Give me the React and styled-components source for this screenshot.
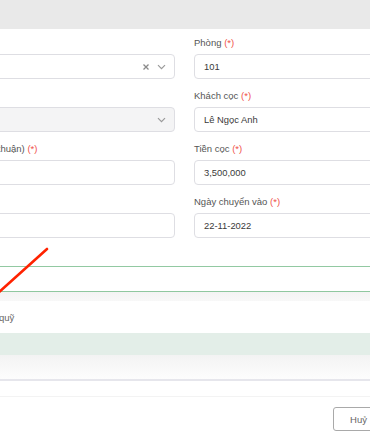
import styled, { createGlobalStyle } from 'styled-components'

const GlobalStyle = createGlobalStyle`
  html, body {
    margin: 0;
    padding: 0;
    background: #fff;
    overflow: hidden;
  }
  body {
    font-family: 'Liberation Sans', Arial, sans-serif;
    width: 370px;
    height: 440px;
  }
`

const fields = [
  { left: { label: 'Nhà', req: true, type: 'select', value: 'Nhà A', clear: true }, right: { label: 'Phòng', req: true, value: '101' } },
  { left: { label: 'Tầng', type: 'select', disabled: true }, right: { label: 'Khách cọc', req: true, value: 'Lê Ngọc Anh' } },
  { left: { label: 'Giá thuê (thoả thuận)', req: true, value: '' }, right: { label: 'Tiền cọc', req: true, value: '3,500,000' } },
  { left: { label: 'Ghi chú', value: '' }, right: { label: 'Ngày chuyển vào', req: true, value: '22-11-2022' } },
]

const Field = ({ label, req, type, value, clear, disabled }) => (
  <FieldWrap>
    <Label>
      {label} {req && <Req>(*)</Req>}
    </Label>
    {type === 'select' ? (
      <Select disabled={disabled}>
        <span>{value}</span>
        <Icons>
          {clear && (
            <svg width="8" height="8" viewBox="0 0 8 8">
              <path d="M1.5 1.5l5 5M6.5 1.5l-5 5" stroke="#8a8a8a" strokeWidth="1.3" />
            </svg>
          )}
          <svg width="9" height="6" viewBox="0 0 9 6">
            <path d="M1 1.2l3.5 3.5L8 1.2" stroke="#9a9a9a" strokeWidth="1.2" fill="none" />
          </svg>
        </Icons>
      </Select>
    ) : (
      <Input>{value}</Input>
    )}
  </FieldWrap>
)

const App = () => {
  return (
    <>
      <GlobalStyle />
      <Page>
        <Header />
        <Modal>
          <Form>
            {fields.map((row, i) => (
              <Row key={i}>
                <Field {...row.left} />
                <Field {...row.right} />
              </Row>
            ))}
          </Form>
          <TabBar />
          <TabShadow />
          <FundLine>Không thu vào quỹ</FundLine>
          <GreenBand />
          <FadeBand />
          <Divider />
          <Spacer />
          <Footer>
            <Button>Huỷ</Button>
            <Button primary>Lưu lại</Button>
          </Footer>
        </Modal>
        <Annotation width="370" height="440" viewBox="0 0 370 440">
          <line x1="47" y1="249" x2="-3" y2="294" stroke="#ff2200" strokeWidth="2.6" strokeLinecap="round" />
        </Annotation>
      </Page>
    </>
  )
}

const Page = styled.div`
  position: relative;
  width: 370px;
  height: 440px;
  overflow: hidden;
`

const Header = styled.div`
  height: 29px;
  background: #e9e9e9;
`

const Modal = styled.div`
  width: 560px;
  margin-left: -80px;
  background: #fff;
`

const Form = styled.div`
  padding: 7px 15px 18px;
`

const Row = styled.div`
  display: grid;
  grid-template-columns: 240px 240px;
  column-gap: 19px;
`

const FieldWrap = styled.div`
  display: flex;
  flex-direction: column;
  margin-bottom: 10px;
`

const Label = styled.div`
  font-size: 9.5px;
  line-height: 14px;
  color: #555;
  margin-bottom: 4px;
  white-space: nowrap;
`

const Req = styled.span`
  color: #f0524a;
`

const Input = styled.div`
  box-sizing: border-box;
  height: 25px;
  border: 1px solid #dedee3;
  border-radius: 4px;
  padding: 0 9px;
  display: flex;
  align-items: center;
  font-size: 9.4px;
  color: #3a3a3a;
  background: #fff;
`

const Select = styled(Input)`
  justify-content: space-between;
  padding-right: 8px;
  background: ${({ disabled }) => (disabled ? '#f4f4f5' : '#fff')};
`

const Icons = styled.div`
  display: flex;
  align-items: center;
  gap: 7px;
`

const TabBar = styled.div`
  height: 24px;
  border-top: 1px solid #92c9a2;
  border-bottom: 1px solid #8fc79f;
`

const TabShadow = styled.div`
  height: 9px;
  background: linear-gradient(#f3f3f3, #f8f8f8);
`

const FundLine = styled.div`
  height: 32px;
  padding-left: 15px;
  display: flex;
  align-items: center;
  font-size: 9.5px;
  color: #666;
`

const GreenBand = styled.div`
  height: 22px;
  background: #e3eee8;
`

const FadeBand = styled.div`
  height: 24px;
  background: linear-gradient(#f3f3f3, #fdfdfd);
`

const Divider = styled.div`
  height: 2px;
  background: #e6e6ec;
`

const Spacer = styled.div`
  height: 15px;
  border-bottom: 1px solid #f3f3f3;
`

const Footer = styled.div`
  display: flex;
  justify-content: flex-end;
  gap: 6px;
  padding: 10px 27px 10px 15px;
`

const Button = styled.div`
  box-sizing: border-box;
  height: 24px;
  padding: 0 16px;
  border: 1px solid ${({ primary }) => (primary ? '#3c9a5f' : '#a9a9a9')};
  border-radius: 3px;
  display: flex;
  align-items: center;
  font-size: 9.5px;
  color: ${({ primary }) => (primary ? '#fff' : '#666')};
  background: ${({ primary }) => (primary ? '#3c9a5f' : '#fff')};
`

const Annotation = styled.svg`
  position: absolute;
  top: 0;
  left: 0;
  pointer-events: none;
`

export default App
